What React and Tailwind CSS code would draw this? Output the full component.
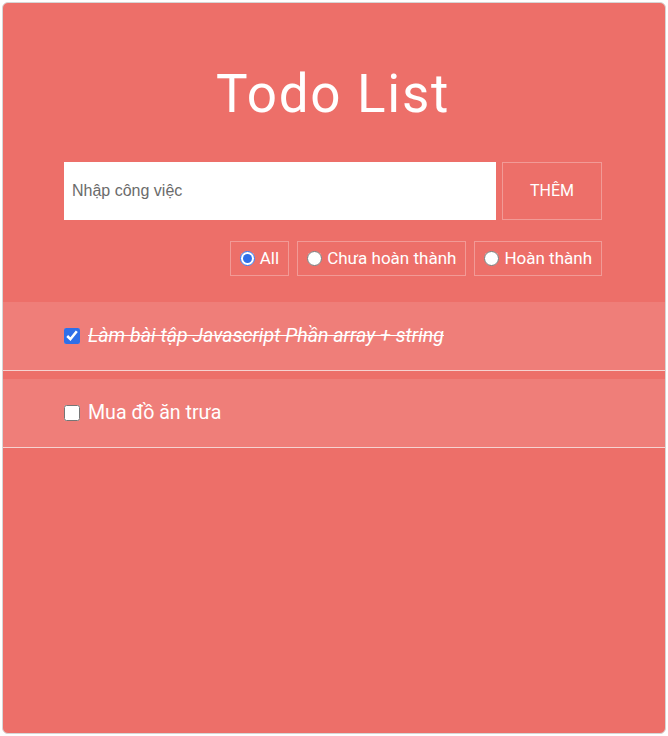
import React, { useState } from "react";

const todosInit = [
  { id: 1, text: "Làm bài tập Javascript Phần array + string", done: true },
  { id: 2, text: "Mua đồ ăn trưa", done: false },
];

const filters = [
  { key: "all", label: "All" },
  { key: "todo", label: "Chưa hoàn thành" },
  { key: "done", label: "Hoàn thành" },
];

export default function App() {
  const [todos, setTodos] = useState(todosInit);
  const [filter, setFilter] = useState("all");
  const [text, setText] = useState("");

  const toggle = (id) =>
    setTodos(todos.map((t) => (t.id === id ? { ...t, done: !t.done } : t)));

  const addTodo = () => {
    if (!text.trim()) return;
    setTodos([...todos, { id: Date.now(), text, done: false }]);
    setText("");
  };

  const shown = todos.filter((t) =>
    filter === "all" ? true : filter === "done" ? t.done : !t.done
  );

  return (
    <div className="min-h-screen bg-white p-[2px] font-['Roboto',sans-serif]">
      <div className="h-[732px] w-[664px] rounded-md border border-[#d6d6d6] bg-[#ed6f69] pt-[60px]">
        {/* header */}
        <div className="pl-[61px] pr-[63px] pb-[26px]">
          <h1 className="text-center text-[53px] leading-[62px] font-normal tracking-[1.7px] text-white">
            Todo List
          </h1>

          <div className="mt-[37px] flex gap-[6px]">
            <input
              type="text"
              placeholder="Nhập công việc"
              value={text}
              onChange={(e) => setText(e.target.value)}
              className="h-[58px] flex-1 bg-white px-2 text-base text-gray-700 outline-none placeholder:text-[#6b6b6b] font-['Liberation_Sans',sans-serif]"
            />
            <button
              onClick={addTodo}
              className="h-[58px] w-[100px] border border-white/30 text-base text-white"
            >
              THÊM
            </button>
          </div>

          <div className="mt-[21px] flex justify-end gap-[8px]">
            {filters.map((f) => (
              <label
                key={f.key}
                className="flex h-[35px] items-center gap-[5px] border border-white/30 px-[9px] text-[17px] text-white"
              >
                <input
                  type="radio"
                  name="filter"
                  checked={filter === f.key}
                  onChange={() => setFilter(f.key)}
                  className="m-0 h-[15px] w-[15px] accent-[#2f6fe8]"
                />
                {f.label}
              </label>
            ))}
          </div>
        </div>

        {/* list */}
        <ul>
          {shown.map((t, i) => (
            <li
              key={t.id}
              className={
                "flex h-[69px] items-center gap-[8px] border-b border-[#f6d3d1] bg-[#ef7e79] pl-[61px] pr-[63px] text-[19.6px] text-white " +
                (i > 0 ? "mt-[8px]" : "")
              }
            >
              <input
                type="checkbox"
                checked={t.done}
                onChange={() => toggle(t.id)}
                className="m-0 h-[16px] w-[16px] accent-[#2f6fe8]"
              />
              <span className={t.done ? "italic line-through" : ""}>
                {t.text}
              </span>
            </li>
          ))}
        </ul>
      </div>
    </div>
  );
}
